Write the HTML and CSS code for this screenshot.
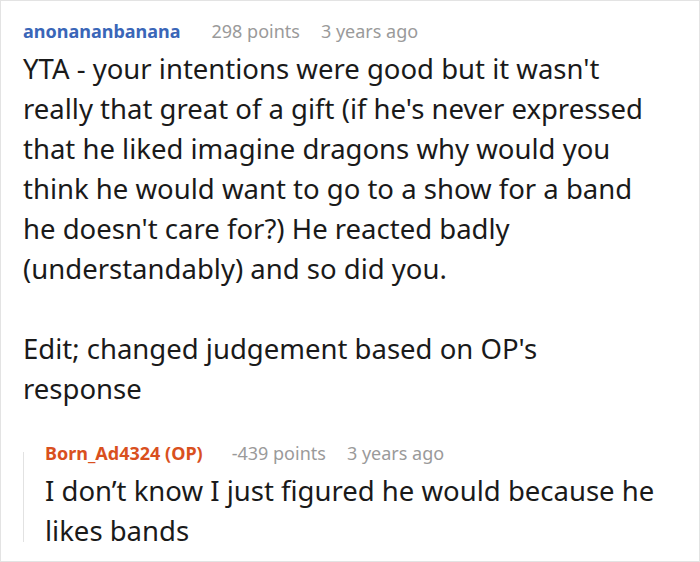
FILE: index.html
```html
<!DOCTYPE html>
<html>
<head>
<meta charset="utf-8">
<link rel="stylesheet" href="styles.css">
</head>
<body>
<div class="frame">
  <div class="comment">
    <div class="meta">
      <span class="user">anonananbanana</span>
      <span class="info">298 points</span>
      <span class="info">3 years ago</span>
    </div>
    <div class="body">
      <p>YTA - your intentions were good but it wasn't really that great of a gift (if he's never expressed that he liked imagine dragons why would you think he would want to go to a show for a band he doesn't care for?) He reacted badly (understandably) and so did you.</p>
      <p>Edit; changed judgement based on OP's response</p>
    </div>
    <div class="reply">
      <div class="meta">
        <span class="user op">Born_Ad4324 (OP)</span>
        <span class="info">-439 points</span>
        <span class="info">3 years ago</span>
      </div>
      <div class="body">
        <p>I don’t know I just figured he would because he likes bands</p>
      </div>
    </div>
  </div>
</div>
</body>
</html>
```
FILE: styles.css
```css
html, body {
  margin: 0;
  padding: 0;
  background: #fff;
}
.frame {
  box-sizing: border-box;
  width: 700px;
  height: 562px;
  border: 1px solid #e3e3e3;
  overflow: hidden;
  font-family: "Noto Sans", "Open Sans", sans-serif;
}
.comment {
  padding: 18px 41px 0 22px;
}
.meta {
  display: flex;
  gap: 21px;
  font-size: 18px;
  line-height: 24px;
}
.user {
  color: #3a66b8;
  font-weight: 700;
  margin-right: 10px;
}
.user.op {
  color: #d9501e;
  margin-right: 8px;
}
.info {
  color: #9a9a9a;
}
.body {
  color: #1a1a1a;
  font-size: 27.5px;
  line-height: 40px;
  margin-top: 6px;
}
.body p {
  margin: 0 0 40px 0;
}
.body p:last-child {
  margin-bottom: 0;
}
.reply {
  position: relative;
  margin-top: 32px;
  padding-left: 22px;
}
.reply::before {
  content: "";
  position: absolute;
  left: 0;
  top: 11px;
  bottom: 9px;
  width: 1px;
  background: #e2e2e2;
}
```
